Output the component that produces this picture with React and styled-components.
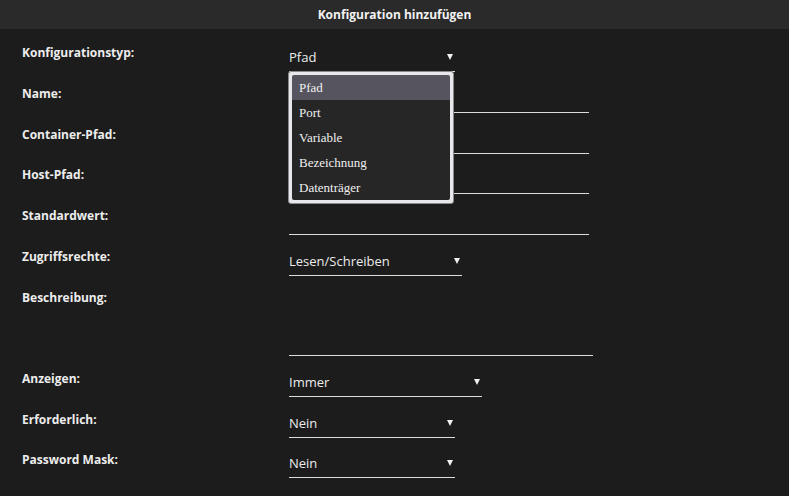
import React from "react";
import styled, { createGlobalStyle } from "styled-components";

const options = ["Pfad", "Port", "Variable", "Bezeichnung", "Datenträger"];

export default function App() {
  return (
    <>
      <GlobalStyle />
      <Page>
        <Header>Konfiguration hinzufügen</Header>
        <Form>
          <Row>
            <Label>Konfigurationstyp:</Label>
            <FieldWrap>
              <Select $width={166}>
                <Value>Pfad</Value>
                <Arrow />
              </Select>
              <Menu>
                {options.map((o, i) => (
                  <MenuItem key={o} $active={i === 0}>
                    {o}
                  </MenuItem>
                ))}
              </Menu>
            </FieldWrap>
          </Row>
          <Row>
            <Label>Name:</Label>
            <TextInput />
          </Row>
          <Row>
            <Label>Container-Pfad:</Label>
            <TextInput />
          </Row>
          <Row>
            <Label>Host-Pfad:</Label>
            <TextInput />
          </Row>
          <Row>
            <Label>Standardwert:</Label>
            <TextInput />
          </Row>
          <Row>
            <Label>Zugriffsrechte:</Label>
            <Select $width={173}>
              <Value>Lesen/Schreiben</Value>
              <Arrow />
            </Select>
          </Row>
          <Row $tall>
            <Label>Beschreibung:</Label>
            <TextArea />
          </Row>
          <Row>
            <Label>Anzeigen:</Label>
            <Select $width={193} $top={3}>
              <Value>Immer</Value>
              <Arrow />
            </Select>
          </Row>
          <Row>
            <Label>Erforderlich:</Label>
            <Select $width={166} $top={3}>
              <Value>Nein</Value>
              <Arrow />
            </Select>
          </Row>
          <Row>
            <Label>Password Mask:</Label>
            <Select $width={166} $top={3}>
              <Value>Nein</Value>
              <Arrow />
            </Select>
          </Row>
        </Form>
      </Page>
    </>
  );
}

const GlobalStyle = createGlobalStyle`
  html, body {
    margin: 0;
    padding: 0;
    background: #1c1c1c;
  }
  * {
    box-sizing: border-box;
  }
`;

const Page = styled.div`
  width: 789px;
  height: 496px;
  overflow: hidden;
  background: #1c1c1c;
  font-family: "Open Sans", "Noto Sans", sans-serif;
  color: #ececec;
`;

const Header = styled.div`
  height: 29px;
  background: #2a2a2a;
  display: flex;
  align-items: center;
  justify-content: center;
  font-size: 12px;
  font-weight: 700;
  color: #f2f2f2;
`;

const Form = styled.div`
  padding: 16px 0 0 22px;
`;

const Row = styled.div`
  display: grid;
  grid-template-columns: 267px auto;
  align-items: start;
  height: ${(p) => (p.$tall ? "81px" : "40.8px")};
`;

const Label = styled.div`
  font-size: 12px;
  font-weight: 700;
  line-height: 16px;
  color: #ededed;
`;

const FieldWrap = styled.div`
  position: relative;
`;

const Select = styled.div`
  position: relative;
  width: ${(p) => p.$width}px;
  margin-top: ${(p) => (p.$top != null ? p.$top : 4)}px;
  padding-bottom: 6px;
  border-bottom: 1px solid #dcdcdc;
  display: flex;
  align-items: center;
`;

const Value = styled.span`
  font-size: 13px;
  line-height: 16px;
  color: #ececec;
`;

const Arrow = styled.span`
  position: absolute;
  right: 2px;
  top: 5px;
  width: 0;
  height: 0;
  border-left: 3px solid transparent;
  border-right: 3px solid transparent;
  border-top: 6px solid #f0f0f0;
`;

const TextInput = styled.div`
  width: 300px;
  height: 27px;
  border-bottom: 1px solid #dcdcdc;
`;

const TextArea = styled.div`
  width: 304px;
  height: 66px;
  border-bottom: 1px solid #dcdcdc;
`;

const Menu = styled.div`
  position: absolute;
  left: -1px;
  top: 26px;
  width: 166px;
  padding: 3px;
  background: #e8e8ec;
  border: 1px solid #8a8a8a;
  border-radius: 3px;
  z-index: 2;
`;

const MenuItem = styled.div`
  height: 25px;
  display: flex;
  align-items: center;
  padding-left: 7px;
  font-family: "Liberation Serif", "DejaVu Serif", serif;
  font-size: 13px;
  color: #f0f0f0;
  background: ${(p) => (p.$active ? "#55545f" : "#262626")};
  &:first-child {
    border-radius: 2px 2px 0 0;
  }
  &:last-child {
    border-radius: 0 0 2px 2px;
  }
`;
